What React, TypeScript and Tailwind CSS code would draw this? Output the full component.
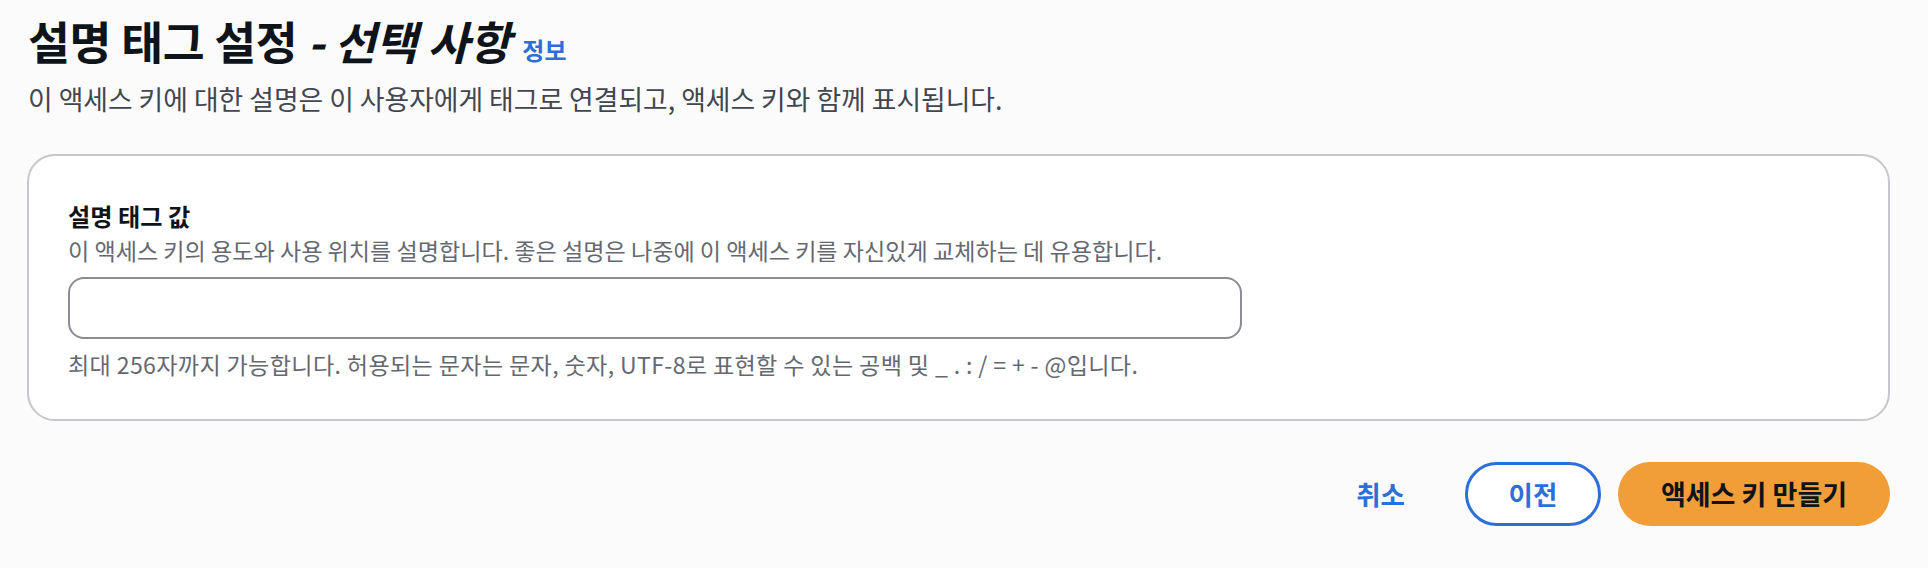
export default function App() {
  return (
    <div className="w-[1928px] h-[568px] bg-[#fbfbfb] pl-[27px] pr-[38px] pt-[14px] text-[#0f141a] font-['Noto_Sans_CJK_KR','Noto_Sans',sans-serif]">
      <div className="flex items-baseline pl-[1px]">
        <h1 className="text-[45.5px] leading-[52px] font-bold tracking-[-0.3px]">
          설명 태그 설정 <i className="italic">- 선택 사항</i>
        </h1>
        <span className="ml-[12px] text-[24px] font-bold text-[#2d6fd9]">정보</span>
      </div>
      <p className="mt-[15px] text-[26.8px] leading-[32px] text-[#424650] pl-[1px]">
        이 액세스 키에 대한 설명은 이 사용자에게 태그로 연결되고, 액세스 키와 함께 표시됩니다.
      </p>
      <div className="mt-[39px] h-[267px] bg-white border-2 border-[#c6c6cd] rounded-[28px] pl-[39px] pt-[44px]">
        <div className="text-[24.2px] leading-[32px] font-bold">설명 태그 값</div>
        <div className="mt-[4px] text-[23.1px] leading-[28px] text-[#656871]">
          이 액세스 키의 용도와 사용 위치를 설명합니다. 좋은 설명은 나중에 이 액세스 키를 자신있게 교체하는 데 유용합니다.
        </div>
        <div className="mt-[13px] w-[1174px] h-[62px] border-2 border-[#8c8c94] rounded-[16px] bg-white"></div>
        <div className="mt-[11px] text-[23.1px] leading-[28px] text-[#656871] tracking-[0.35px]">
          최대 256자까지 가능합니다. 허용되는 문자는 문자, 숫자, UTF-8로 표현할 수 있는 공백 및 _ . : / = + - @입니다.
        </div>
      </div>
      <div className="mt-[41px] flex justify-end items-center">
        <button className="h-[64px] px-[20px] text-[26.5px] font-bold text-[#2d6fd9]">취소</button>
        <button className="ml-[40px] w-[136px] h-[64px] rounded-full border-[3px] border-[#2d6fd9] bg-white text-[26.5px] font-bold text-[#2d6fd9]">이전</button>
        <button className="ml-[17px] w-[272px] h-[64px] rounded-full bg-[#f19e38] text-[27px] font-bold text-[#0f141a]">액세스 키 만들기</button>
      </div>
    </div>
  );
}
